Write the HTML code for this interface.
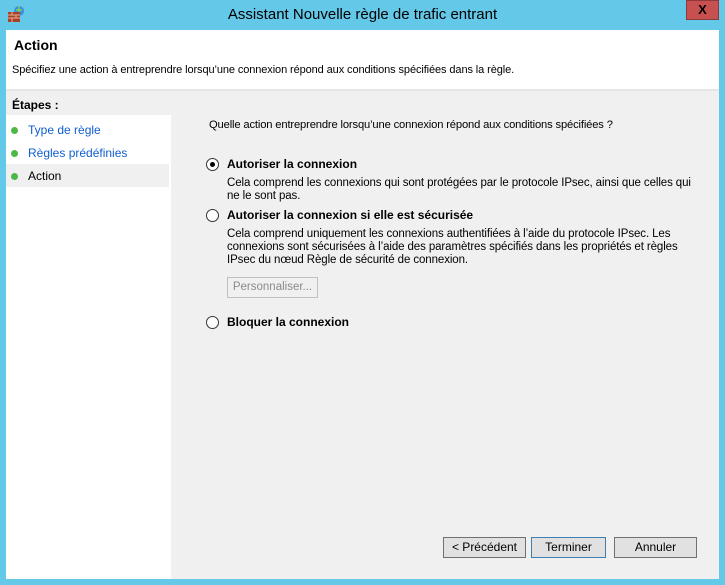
<!DOCTYPE html>
<html><head><meta charset="utf-8"><style>
body{margin:0;width:725px;height:585px;background:#64c8e9;position:relative;overflow:hidden;font-family:"Liberation Sans",sans-serif;font-size:12px;color:#000}
.a{position:absolute;white-space:nowrap}
.s{font-size:11.5px;letter-spacing:-0.1px}
.btn{position:absolute;height:21px;background:#e1e1e1;border:1px solid #adadad;box-sizing:border-box;text-align:center;line-height:19px;font-size:12px}
.rad{position:absolute;width:11px;height:11px;border:1px solid #333;border-radius:50%;background:#fff}
.rad.on::after{content:"";position:absolute;left:3px;top:3px;width:5px;height:5px;border-radius:50%;background:#000}
.b{font-weight:bold}
.dot{position:absolute;width:7px;height:7px;border-radius:50%;background:#4cb848}
</style></head><body>
<svg class="a" style="left:7px;top:5px" width="18" height="18" viewBox="0 0 18 18"><circle cx="12" cy="6" r="5" fill="#3a8fd8"/><path d="M9 5h6M12 1v10" stroke="#7fd060" stroke-width="1.5"/><rect x="1" y="7" width="12" height="10" fill="#a6412c"/><path d="M1 10h12M1 13h12M5 7v3M9 10v3M5 13v4" stroke="#e8b090" stroke-width="1"/></svg>
<div class="a" style="left:0;top:6px;width:725px;text-align:center;font-size:15px;color:#000">Assistant Nouvelle règle de trafic entrant</div>
<div class="a" style="left:686px;top:0;width:33px;height:20px;background:#c75050;border:1px solid #8e3a3a;box-sizing:border-box;text-align:center;font-weight:bold;font-size:13px;line-height:18px">X</div>
<div class="a" style="left:6px;top:30px;width:713px;height:549px;background:#f0f0f0"></div>
<div class="a" style="left:6px;top:30px;width:713px;height:59px;background:#fff"></div>
<div class="a" style="left:6px;top:89px;width:713px;height:2px;background:#e6e6e6"></div>
<div class="a b" style="left:14px;top:37px;font-size:14px">Action</div>
<div class="a" style="left:12px;top:64px;font-size:11px;letter-spacing:-0.1px">Spécifiez une action à entreprendre lorsqu’une connexion répond aux conditions spécifiées dans la règle.</div>
<div class="a" style="left:6px;top:93px;width:165px;height:486px;background:#fff"></div>
<div class="a" style="left:6px;top:93px;width:165px;height:22px;background:#f0f0f0"></div>
<div class="a b" style="left:12px;top:98px">Étapes :</div>
<div class="dot" style="left:11px;top:127px"></div><div class="a" style="left:28px;top:123px;color:#0f5ed0">Type de règle</div>
<div class="dot" style="left:11px;top:150px"></div><div class="a" style="left:28px;top:146px;color:#0f5ed0">Règles prédéfinies</div>
<div class="a" style="left:6px;top:164px;width:163px;height:23px;background:#f0f0f0"></div>
<div class="dot" style="left:11px;top:173px"></div><div class="a" style="left:28px;top:169px">Action</div>
<div class="a" style="left:173px;top:93px;width:546px;height:486px;background:#f0f0f0"></div>
<div class="a" style="left:209px;top:119px;font-size:11.2px;letter-spacing:-0.15px">Quelle action entreprendre lorsqu’une connexion répond aux conditions spécifiées ?</div>
<div class="rad on" style="left:206px;top:158px"></div>
<div class="a b" style="left:227px;top:157px">Autoriser la connexion</div>
<div class="a s" style="left:227px;top:177px;line-height:13px">Cela comprend les connexions qui sont protégées par le protocole IPsec, ainsi que celles qui<br>ne le sont pas.</div>
<div class="rad" style="left:206px;top:209px"></div>
<div class="a b" style="left:227px;top:208px">Autoriser la connexion si elle est sécurisée</div>
<div class="a s" style="left:227px;top:228px;line-height:13px">Cela comprend uniquement les connexions authentifiées à l’aide du protocole IPsec. Les<br>connexions sont sécurisées à l’aide des paramètres spécifiés dans les propriétés et règles<br>IPsec du nœud Règle de sécurité de connexion.</div>
<div class="btn" style="left:227px;top:277px;width:91px;height:21px;background:#f0f0f0;border-color:#c0c0c0;color:#8a8a8a;font-size:11.5px">Personnaliser...</div>
<div class="rad" style="left:206px;top:316px"></div>
<div class="a b" style="left:227px;top:315px">Bloquer la connexion</div>
<div class="btn" style="left:443px;top:537px;width:83px;border-color:#707070">&lt; Précédent</div>
<div class="btn" style="left:531px;top:537px;width:75px;border-color:#3c7fb1">Terminer</div>
<div class="btn" style="left:614px;top:537px;width:83px;border-color:#707070">Annuler</div>
</body></html>
